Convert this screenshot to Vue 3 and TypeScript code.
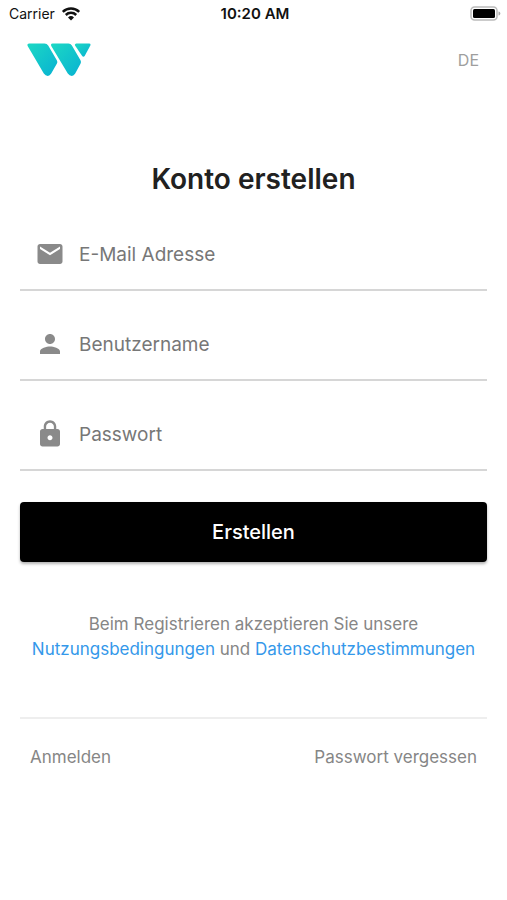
<script setup lang="ts">
import { ref } from 'vue'

interface Field {
  id: string
  label: string
  type: string
  autocomplete: string
  icon: string
}

const fields: Field[] = [
  {
    id: 'email',
    label: 'E-Mail Adresse',
    type: 'email',
    autocomplete: 'email',
    icon: 'M20 4H4c-1.1 0-2 .9-2 2v12c0 1.1.9 2 2 2h16c1.100 0 2-.9 2-2V6c0-1.100-.9-2-2-2zm0 4l-8 5-8-5V6l8 5 8-5v2z',
  },
  {
    id: 'username',
    label: 'Benutzername',
    type: 'text',
    autocomplete: 'username',
    icon: 'M12 12c2.210 0 4-1.790 4-4s-1.790-4-4-4-4 1.790-4 4 1.790 4 4 4zm0 2c-2.670 0-8 1.340-8 4v2h16v-2c0-2.660-5.330-4-8-4z',
  },
  {
    id: 'password',
    label: 'Passwort',
    type: 'password',
    autocomplete: 'new-password',
    icon: 'M18 8h-1V6c0-2.760-2.240-5-5-5S7 3.240 7 6v2H6c-1.100 0-2 .9-2 2v10c0 1.100.9 2 2 2h12c1.100 0 2-.9 2-2V10c0-1.100-.9-2-2-2zm-6 9c-1.100 0-2-.9-2-2s.9-2 2-2 2 .9 2 2-.9 2-2 2zm3.100-9H8.900V6c0-1.710 1.390-3.100 3.100-3.100s3.100 1.390 3.100 3.100v2z',
  },
]

const values = ref<Record<string, string>>({ email: '', username: '', password: '' })
</script>

<template>
  <div class="screen">
    <div class="status">
      <div class="carrier">
        <span>Carrier</span>
        <svg class="wifi" viewBox="0 0 20 14" aria-hidden="true">
          <path d="M1.800 4.800a11.800 11.800 0 0 1 16.400 0M4.800 8a7.400 7.400 0 0 1 10.400 0" fill="none" stroke="#111" stroke-width="2.500" />
          <path d="M7 10.500a4.300 4.300 0 0 1 6 0l-3 3z" fill="#111" />
        </svg>
      </div>
      <span class="clock">10:20 AM</span>
      <svg class="battery" viewBox="0 0 31 16" aria-hidden="true">
        <rect x="1" y="1" width="26" height="13" rx="3.500" fill="#fff" stroke="#bbb" stroke-width="1.500" />
        <rect x="3" y="3" width="22" height="9" rx="1.500" fill="#000" />
        <path d="M28.500 5.500c2.500.8 2.500 3.200 0 4z" fill="#aaa" />
      </svg>
    </div>

    <header class="header">
      <svg class="logo" viewBox="0 0 64 34" role="img" aria-label="Logo">
        <defs>
          <linearGradient id="brand" x1="0" y1="0" x2="1" y2="1">
            <stop offset="0" stop-color="#1cd8c4" />
            <stop offset="1" stop-color="#08b2d2" />
          </linearGradient>
        </defs>
        <g fill="url(#brand)">
          <path d="M2 .5H17.500Q20 .5 21.200 2.600L29.800 17.200Q30.800 19 29.800 20.800L24.200 30.600Q22.800 33 20.800 33Q18.500 33 16.800 30.600L.8 3.200Q-.4.800 2 .5Z" />
          <path d="M25.600.5H41.500Q43.700.5 44.900 2.600L53.500 17.200Q54.500 19 53.500 20.800L48.200 30.600Q46.800 33 44.800 33Q42.500 33 40.800 30.600L24.400 3.200Q23.200.8 25.600.5Z" />
          <path d="M49.300.5H62Q64.300.7 63.200 2.800L57.800 12.800Q56.400 14.600 55 12.800L48.200 2.800Q47.200.8 49.300.5Z" />
        </g>
      </svg>
      <button class="language" type="button">DE</button>
    </header>

    <main class="content">
      <h1 class="title">Konto erstellen</h1>

      <form class="form" @submit.prevent>
        <div v-for="field in fields" :key="field.id" class="field">
          <label class="field-label" :for="field.id" :aria-label="field.label">
            <svg class="icon" viewBox="0 0 24 24" aria-hidden="true"><path :d="field.icon" /></svg>
          </label>
          <input
            :id="field.id"
            v-model="values[field.id]"
            class="input"
            :type="field.type"
            :placeholder="field.label"
            :autocomplete="field.autocomplete"
          />
        </div>
        <button class="submit" type="submit">Erstellen</button>
      </form>

      <p class="terms">
        Beim Registrieren akzeptieren Sie unsere<br />
        <a href="#nutzungsbedingungen">Nutzungsbedingungen</a> und
        <a href="#datenschutz">Datenschutzbestimmungen</a>
      </p>

      <nav class="links">
        <a href="#anmelden">Anmelden</a>
        <a href="#passwort-vergessen">Passwort vergessen</a>
      </nav>
    </main>
  </div>
</template>

<style>
body {
  background: #fff;
}
</style>

<style scoped>
.screen {
  min-height: 100vh;
  background: #fff;
  color: #212121;
  font-family: Inter, "Liberation Sans", sans-serif;
}

.status {
  display: grid;
  grid-template-columns: 1fr auto 1fr;
  align-items: center;
  height: 27px;
  padding: 0 6px 0 9px;
  font-size: 14px;
  color: #111;
}

.carrier {
  display: flex;
  align-items: center;
  gap: 6px;
}

.wifi {
  width: 20px;
  height: 14px;
}

.clock {
  font-size: 15px;
  font-weight: 600;
}

.battery {
  justify-self: end;
  width: 31px;
  height: 16px;
}

.header {
  display: flex;
  align-items: center;
  justify-content: space-between;
  height: 65px;
  padding: 0 28px 0 27px;
}

.logo {
  width: 64px;
  height: 34px;
}

.language {
  padding: 0;
  border: 0;
  background: none;
  color: #9e9e9e;
  font: inherit;
  font-size: 16px;
}

.content {
  padding: 69px 20px 0;
}

.title {
  margin: 0;
  font-size: 28px;
  font-weight: 600;
  line-height: 36px;
  text-align: center;
}

.form {
  display: grid;
  gap: 18px;
  margin-top: 22px;
}

.field {
  display: flex;
  align-items: center;
  gap: 14px;
  height: 72px;
  padding-left: 15px;
  border-bottom: 2px solid #d6d6d6;
  box-sizing: border-box;
}

.field-label {
  display: flex;
}

.icon {
  width: 30px;
  height: 30px;
  fill: #8a8a8a;
}

.input {
  flex: 1;
  min-width: 0;
  height: 60px;
  padding: 0;
  border: 0;
  outline: 0;
  background: none;
  color: #212121;
  font: inherit;
  font-size: 19px;
}

.input::placeholder {
  color: #777;
  opacity: 1;
}

.submit {
  height: 60px;
  margin-top: 13px;
  border: 0;
  border-radius: 4px;
  background: #000;
  box-shadow: 0 2px 3px rgba(0, 0, 0, 0.3);
  color: #fff;
  font: inherit;
  font-size: 20px;
  font-weight: 500;
}

.terms {
  margin: 50px 0 0;
  color: #868686;
  font-size: 17px;
  line-height: 25px;
  text-align: center;
}

.terms a {
  color: #3498ea;
  text-decoration: none;
}

.links {
  display: flex;
  justify-content: space-between;
  margin-top: 55px;
  padding: 28px 10px;
  border-top: 2px solid #eee;
  font-size: 17px;
  line-height: 20px;
}

.links a {
  color: #868686;
  text-decoration: none;
}
</style>
